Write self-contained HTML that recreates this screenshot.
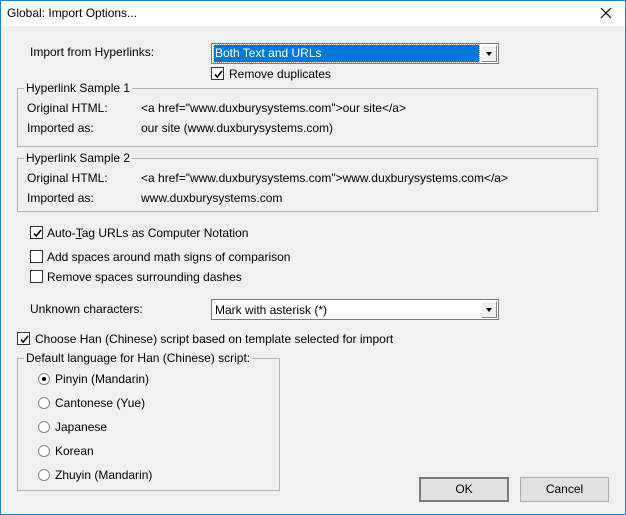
<!DOCTYPE html>
<html><head><style>
*{margin:0;padding:0;box-sizing:border-box}
body{width:626px;height:515px;position:relative;background:#f0f0f0;font:12px "Liberation Sans",sans-serif;color:#000;overflow:hidden}
.a{position:absolute;white-space:nowrap;line-height:14px}
.frame{position:absolute;left:0;top:0;width:626px;height:515px;border:1px solid #1883d7;border-top:none}
.title{position:absolute;left:0;top:0;width:626px;height:26px;background:#fff;border-top:1px solid #1883d7}
.grp{position:absolute;border:1px solid #b4b4b4}
.leg{position:absolute;background:#f0f0f0;padding:0 2px;line-height:14px}
.cb{position:absolute;width:13px;height:13px;border:1px solid #333;background:#fff}
.cb svg{position:absolute;left:1px;top:1px}
.rb{position:absolute;width:12px;height:12px;border-radius:50%;border:1px solid #888;background:#fff}
.rb.on::after{content:"";position:absolute;left:3px;top:3px;width:4px;height:4px;border-radius:50%;background:#000}
.combo{position:absolute;height:21px;border:1px solid #7a7a7a;background:#fff}
.combo .btn{position:absolute;right:1px;top:1px;width:16px;height:17px;background:#f0f0f0;border:1px solid #fff;border-right-color:#888;border-bottom-color:#888}
.combo .btn::after{content:"";position:absolute;left:4px;top:6px;border-left:3.5px solid transparent;border-right:3.5px solid transparent;border-top:4px solid #000}
.button{position:absolute;height:25px;border:1px solid #adadad;background:#e1e1e1;text-align:center;line-height:23px}
</style></head><body>
<div class="title"></div>
<div class="frame"></div>
<div class="a" style="left:7px;top:6px">Global: Import Options...</div>
<svg class="a" style="left:600px;top:7px" width="12" height="12"><path d="M1 1L11 11M11 1L1 11" stroke="#000" stroke-width="1.2"/></svg>

<div class="a" style="left:30px;top:45px">Import from Hyperlinks:</div>
<div class="combo" style="left:211px;top:43px;width:288px">
 <div style="position:absolute;left:2px;top:1px;width:265px;height:17px;background:#0078d7;outline:1px dotted #e0a040;color:#fff;padding-left:1px;line-height:17px">Both Text and URLs</div>
 <div class="btn"></div>
</div>
<div class="cb" style="left:211px;top:67px"><svg width="11" height="11"><path d="M2 5.5L4.2 8L9 2" stroke="#000" stroke-width="1.6" fill="none"/></svg></div>
<div class="a" style="left:229px;top:67px">Remove duplicates</div>

<div class="grp" style="left:17px;top:88px;width:581px;height:59px"></div>
<div class="leg a" style="left:24px;top:81px">Hyperlink Sample 1</div>
<div class="a" style="left:27px;top:101px">Original HTML:</div>
<div class="a" style="left:141px;top:101px">&lt;a href="www.duxburysystems.com"&gt;our site&lt;/a&gt;</div>
<div class="a" style="left:27px;top:121px">Imported as:</div>
<div class="a" style="left:141px;top:121px">our site (www.duxburysystems.com)</div>

<div class="grp" style="left:17px;top:158px;width:581px;height:54px"></div>
<div class="leg a" style="left:24px;top:151px">Hyperlink Sample 2</div>
<div class="a" style="left:27px;top:171px">Original HTML:</div>
<div class="a" style="left:141px;top:171px">&lt;a href="www.duxburysystems.com"&gt;www.duxburysystems.com&lt;/a&gt;</div>
<div class="a" style="left:27px;top:191px">Imported as:</div>
<div class="a" style="left:141px;top:191px">www.duxburysystems.com</div>

<div class="cb" style="left:30px;top:226px"><svg width="11" height="11"><path d="M2 5.5L4.2 8L9 2" stroke="#000" stroke-width="1.6" fill="none"/></svg></div>
<div class="a" style="left:47px;top:226px">Auto-<u>T</u>ag URLs as Computer Notation</div>
<div class="cb" style="left:30px;top:250px"></div>
<div class="a" style="left:47px;top:250px">Add spaces around math signs of comparison</div>
<div class="cb" style="left:30px;top:270px"></div>
<div class="a" style="left:47px;top:270px">Remove spaces surrounding dashes</div>

<div class="a" style="left:30px;top:302px">Unknown characters:</div>
<div class="combo" style="left:211px;top:299px;width:288px">
 <div style="position:absolute;left:3px;top:2px;line-height:16px">Mark with asterisk (*)</div>
 <div class="btn"></div>
</div>

<div class="cb" style="left:17px;top:332px"><svg width="11" height="11"><path d="M2 5.5L4.2 8L9 2" stroke="#000" stroke-width="1.6" fill="none"/></svg></div>
<div class="a" style="left:35px;top:332px">Choose Han (Chinese) script based on template selected for import</div>

<div class="grp" style="left:17px;top:358px;width:263px;height:133px"></div>
<div class="leg a" style="left:24px;top:351px">Default language for Han (Chinese) script:</div>
<div class="rb on" style="left:38px;top:373px"></div><div class="a" style="left:55px;top:372px">Pinyin (Mandarin)</div>
<div class="rb" style="left:38px;top:397px"></div><div class="a" style="left:55px;top:396px">Cantonese (Yue)</div>
<div class="rb" style="left:38px;top:421px"></div><div class="a" style="left:55px;top:420px">Japanese</div>
<div class="rb" style="left:38px;top:445px"></div><div class="a" style="left:55px;top:444px">Korean</div>
<div class="rb" style="left:38px;top:469px"></div><div class="a" style="left:55px;top:468px">Zhuyin (Mandarin)</div>

<div class="button" style="left:419px;top:477px;width:90px;border:2px solid #7a7a7a;line-height:21px">OK</div>
<div class="button" style="left:520px;top:477px;width:89px">Cancel</div>
</body></html>
